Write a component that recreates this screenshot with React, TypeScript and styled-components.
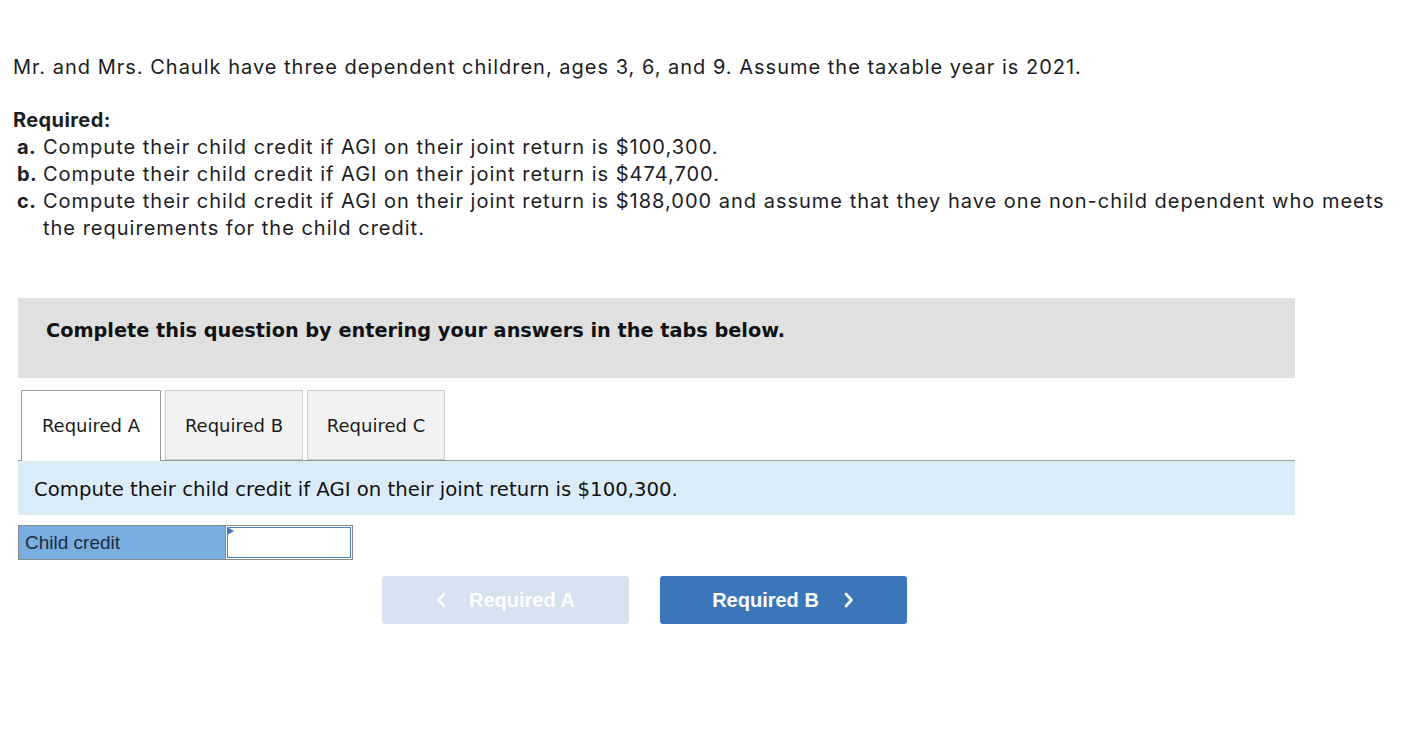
import React from 'react';
import styled, { createGlobalStyle } from 'styled-components';

const GlobalStyle = createGlobalStyle`
  html, body {
    margin: 0;
    padding: 0;
    background: #ffffff;
  }
`;

const Page = styled.div`
  width: 1417px;
  min-height: 753px;
  padding-top: 54px;
  box-sizing: border-box;
  font-family: Inter, 'Open Sans', sans-serif;
  color: #1c1c24;
`;

const Prompt = styled.div`
  padding-left: 13px;
  max-width: 1400px;
  font-size: 20px;
  line-height: 27px;
  letter-spacing: 1px;
`;

const Intro = styled.p`
  margin: 0 0 26px;
`;

const RequiredTitle = styled.div`
  font-weight: 700;
  letter-spacing: 0.4px;
`;

const PartList = styled.ol`
  list-style: none;
  margin: 0;
  padding: 0;
`;

const Part = styled.li`
  display: flex;
  padding-left: 4px;
`;

const PartLetter = styled.span`
  flex: 0 0 26px;
  font-weight: 700;
  letter-spacing: 0.4px;
`;

const Question = styled.section`
  margin: 56px 0 0 18px;
  width: 1277px;
`;

const Banner = styled.div`
  height: 80px;
  box-sizing: border-box;
  padding: 21px 0 0 28px;
  background: #e0e0e0;
  font-family: 'DejaVu Sans', Verdana, sans-serif;
  font-weight: 700;
  font-size: 19.3px;
  line-height: 24px;
  color: #111;
`;

const TabBar = styled.div`
  display: flex;
  gap: 4px;
  margin-top: 12px;
  padding-left: 3px;
  border-bottom: 1px solid #999;
`;

const Tab = styled.button<{ $active?: boolean }>`
  width: ${p => (p.$active ? 140 : 138)}px;
  height: ${p => (p.$active ? 71 : 70)}px;
  margin-bottom: ${p => (p.$active ? -1 : 0)}px;
  box-sizing: border-box;
  border: 1px solid ${p => (p.$active ? '#9a9a9a' : '#c9c9c9')};
  border-bottom: ${p => (p.$active ? 'none' : '1px solid #c9c9c9')};
  background: ${p => (p.$active ? '#ffffff' : '#f2f2f2')};
  font-family: 'DejaVu Sans', Verdana, sans-serif;
  font-size: 18px;
  color: #1a1a1a;
  padding: 0 0 ${p => (p.$active ? 1 : 0)}px;
  cursor: pointer;
`;

const Instruction = styled.div`
  height: 54px;
  box-sizing: border-box;
  display: flex;
  align-items: center;
  padding: 3px 0 0 16px;
  background: #dbecf9;
  font-family: 'DejaVu Sans', Verdana, sans-serif;
  font-size: 19.7px;
  color: #111;
`;

const AnswerRow = styled.div`
  display: flex;
  margin-top: 10px;
  height: 35px;
`;

const LabelCell = styled.div`
  width: 207px;
  box-sizing: border-box;
  border: 1px solid #888;
  border-right: none;
  background: #7aaee3;
  display: flex;
  align-items: center;
  padding-left: 6px;
  font-family: 'Liberation Sans', Arial, sans-serif;
  font-size: 19px;
  color: #1e2b3a;
`;

const InputCell = styled.div`
  position: relative;
  width: 128px;
  box-sizing: border-box;
  border: 1px solid #888;
  padding: 1px;
  background: #fff;
`;

const AnswerInput = styled.input`
  width: 100%;
  height: 100%;
  box-sizing: border-box;
  border: 1.5px solid #4a80c4;
  outline: none;
  font-family: 'Liberation Sans', Arial, sans-serif;
  font-size: 16px;
  text-align: right;
  padding: 0 4px;
`;

const Flag = styled.span`
  position: absolute;
  left: 1px;
  top: 1px;
  width: 0;
  height: 0;
  border-top: 4.5px solid transparent;
  border-bottom: 4.5px solid transparent;
  border-left: 7px solid #3a78c3;
`;

const NavRow = styled.div`
  display: flex;
  gap: 31px;
  margin-top: 16px;
  padding-left: 364px;
`;

const NavButton = styled.button<{ $disabled?: boolean }>`
  width: 247px;
  height: 48px;
  border: none;
  border-radius: 3px;
  background: ${p => (p.$disabled ? '#d6e2f0' : '#3a76b9')};
  color: #fff;
  font-family: 'Liberation Sans', Arial, sans-serif;
  font-weight: 700;
  font-size: 20px;
  display: flex;
  align-items: center;
  justify-content: center;
  gap: ${p => (p.$disabled ? 22 : 25)}px;
  cursor: ${p => (p.$disabled ? 'default' : 'pointer')};
  padding: 0;
`;

const Chevron = ({ dir }: { dir: 'left' | 'right' }) => (
  <svg width="11" height="16" viewBox="0 0 11 16">
    <polyline
      points={dir === 'left' ? '8,2 2.5,8 8,14' : '2,2 7.5,8 2,14'}
      fill="none"
      stroke="#fff"
      strokeWidth="2.6"
      strokeLinecap="round"
      strokeLinejoin="round"
    />
  </svg>
);

export default function App() {
  return (
    <>
      <GlobalStyle />
      <Page>
        <Prompt>
          <Intro>
            Mr. and Mrs. Chaulk have three dependent children, ages 3, 6, and 9. Assume the taxable year is 2021.
          </Intro>
          <RequiredTitle>Required:</RequiredTitle>
          <PartList>
            <Part>
              <PartLetter>a.</PartLetter>
              <span>Compute their child credit if AGI on their joint return is $100,300.</span>
            </Part>
            <Part>
              <PartLetter>b.</PartLetter>
              <span>Compute their child credit if AGI on their joint return is $474,700.</span>
            </Part>
            <Part>
              <PartLetter>c.</PartLetter>
              <span>
                Compute their child credit if AGI on their joint return is $188,000 and assume that they have one
                non-child dependent who meets the requirements for the child credit.
              </span>
            </Part>
          </PartList>
        </Prompt>

        <Question>
          <Banner>Complete this question by entering your answers in the tabs below.</Banner>
          <TabBar>
            <Tab $active>Required A</Tab>
            <Tab>Required B</Tab>
            <Tab>Required C</Tab>
          </TabBar>
          <Instruction>Compute their child credit if AGI on their joint return is $100,300.</Instruction>
          <AnswerRow>
            <LabelCell>Child credit</LabelCell>
            <InputCell>
              <AnswerInput type="text" aria-label="Child credit" />
              <Flag />
            </InputCell>
          </AnswerRow>
          <NavRow>
            <NavButton $disabled disabled>
              <Chevron dir="left" />
              <span>Required A</span>
            </NavButton>
            <NavButton>
              <span>Required B</span>
              <Chevron dir="right" />
            </NavButton>
          </NavRow>
        </Question>
      </Page>
    </>
  );
}
